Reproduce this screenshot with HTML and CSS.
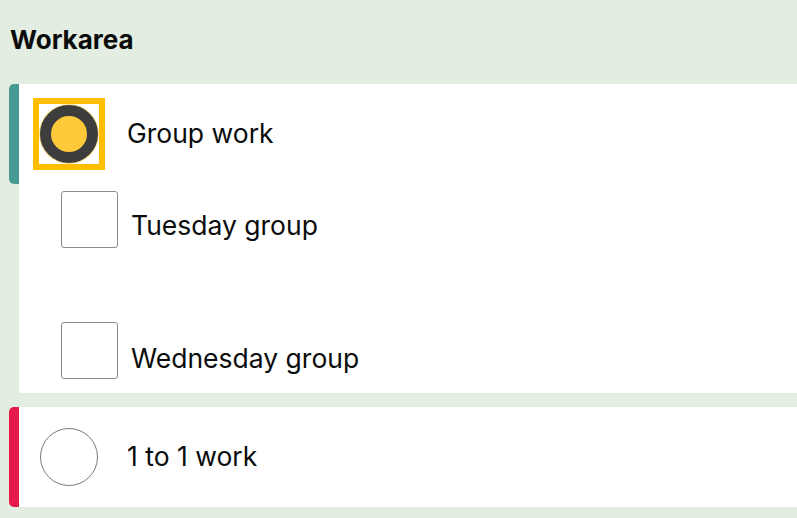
FILE: index.html
```html
<!DOCTYPE html>
<html lang="en">
<head>
<meta charset="utf-8">
<title>Workarea</title>
<link rel="stylesheet" href="styles.css">
</head>
<body>
<main class="page">
  <h2 class="title">Workarea</h2>
  <section class="group">
    <div class="option option--teal">
      <span class="radio-wrap radio-wrap--focus"><span class="radio radio--checked"></span></span>
      <span class="option-label">Group work</span>
    </div>
    <div class="sub">
      <div class="check-row">
        <span class="checkbox"></span>
        <span class="check-label">Tuesday group</span>
      </div>
      <div class="check-row">
        <span class="checkbox"></span>
        <span class="check-label check-label--low">Wednesday group</span>
      </div>
    </div>
  </section>
  <section class="group">
    <div class="option option--red">
      <span class="radio-wrap"><span class="radio"></span></span>
      <span class="option-label">1 to 1 work</span>
    </div>
  </section>
</main>
</body>
</html>
```
FILE: styles.css
```css
html, body {
  margin: 0;
  padding: 0;
  background: #e3ede2;
  font-family: Inter, "Noto Sans", sans-serif;
  color: #0b0c0c;
  overflow: hidden;
}

.page {
  width: 797px;
  height: 518px;
}

.title {
  margin: 0;
  padding: 24px 0 0 10px;
  height: 84px;
  box-sizing: border-box;
  font-size: 26px;
  font-weight: 700;
  line-height: 32px;
}

.group {
  margin-left: 9px;
  margin-bottom: 14px;
  display: flex;
  flex-direction: column;
}

.option {
  height: 100px;
  background: #fff;
  border-left: 10px solid #479a92;
  border-radius: 5px 0 0 5px;
  display: flex;
  align-items: center;
  padding-left: 14px;
}

.option--teal { border-left-color: #479a92; }
.option--red { border-left-color: #e5194c; }

.radio-wrap {
  flex: none;
  width: 72px;
  height: 72px;
  box-sizing: border-box;
  border: 6px solid transparent;
  padding: 1px;
}

.radio-wrap--focus {
  border-color: #ffbf00;
}

.radio {
  display: block;
  width: 58px;
  height: 58px;
  box-sizing: border-box;
  border-radius: 50%;
  border: 1px solid #7a7a7a;
  background: #fff;
}

.radio--checked {
  border: 11px solid #3d3d3d;
  background: #ffca3a;
  box-shadow: 0 0 0 1px rgba(255, 191, 0, 0.45);
}

.option-label {
  margin-left: 22px;
  font-size: 26.5px;
  line-height: 32px;
  padding-bottom: 3px;
}

.sub {
  margin-left: 10px;
  background: #fff;
  padding: 7px 0 13px 42px;
  display: flex;
  flex-direction: column;
  gap: 73px;
}

.check-row {
  height: 58px;
  display: flex;
  align-items: flex-start;
}

.checkbox {
  width: 57px;
  height: 57px;
  box-sizing: border-box;
  border: 1px solid #8a8a8a;
  border-radius: 3px;
  background: #fff;
  flex: none;
}

.check-label {
  margin-left: 13px;
  font-size: 26.5px;
  line-height: 32px;
  padding-top: 18px;
}

.check-label--low {
  padding-top: 20px;
}
```
